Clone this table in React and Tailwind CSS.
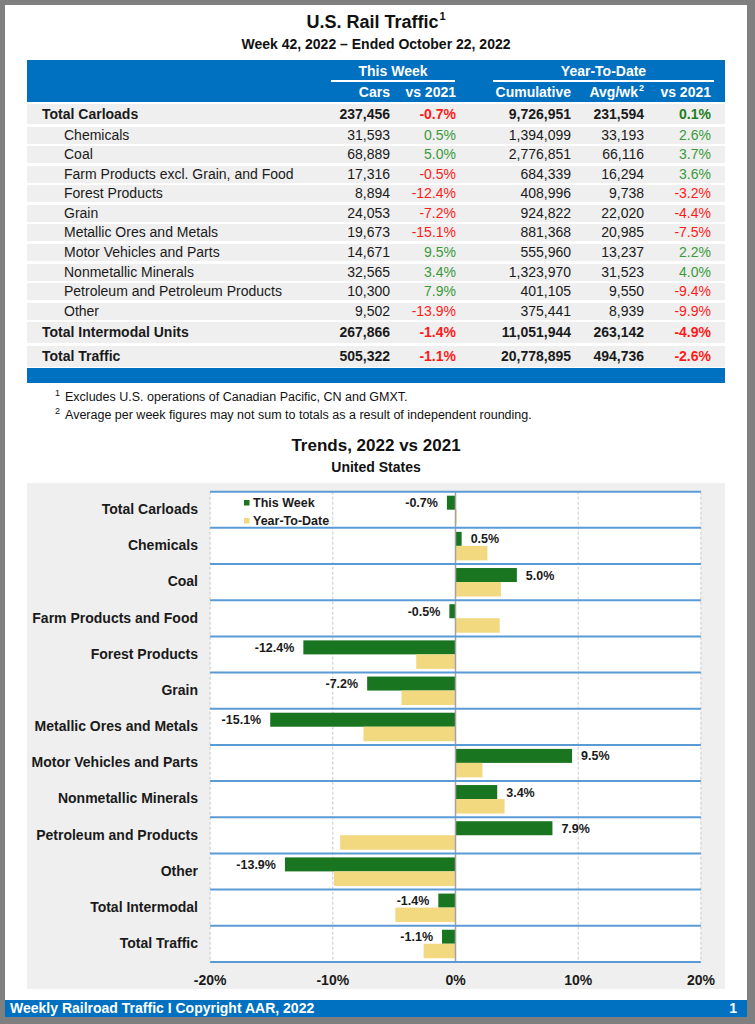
const rows = [
  { label: "Total Carloads", cars: "237,456", vs: "-0.7%", cum: "9,726,951", avg: "231,594", ytd: "0.1%", bold: true },
  { label: "Chemicals", cars: "31,593", vs: "0.5%", cum: "1,394,099", avg: "33,193", ytd: "2.6%" },
  { label: "Coal", cars: "68,889", vs: "5.0%", cum: "2,776,851", avg: "66,116", ytd: "3.7%" },
  { label: "Farm Products excl. Grain, and Food", cars: "17,316", vs: "-0.5%", cum: "684,339", avg: "16,294", ytd: "3.6%" },
  { label: "Forest Products", cars: "8,894", vs: "-12.4%", cum: "408,996", avg: "9,738", ytd: "-3.2%" },
  { label: "Grain", cars: "24,053", vs: "-7.2%", cum: "924,822", avg: "22,020", ytd: "-4.4%" },
  { label: "Metallic Ores and Metals", cars: "19,673", vs: "-15.1%", cum: "881,368", avg: "20,985", ytd: "-7.5%" },
  { label: "Motor Vehicles and Parts", cars: "14,671", vs: "9.5%", cum: "555,960", avg: "13,237", ytd: "2.2%" },
  { label: "Nonmetallic Minerals", cars: "32,565", vs: "3.4%", cum: "1,323,970", avg: "31,523", ytd: "4.0%" },
  { label: "Petroleum and Petroleum Products", cars: "10,300", vs: "7.9%", cum: "401,105", avg: "9,550", ytd: "-9.4%" },
  { label: "Other", cars: "9,502", vs: "-13.9%", cum: "375,441", avg: "8,939", ytd: "-9.9%" },
  { label: "Total Intermodal Units", cars: "267,866", vs: "-1.4%", cum: "11,051,944", avg: "263,142", ytd: "-4.9%", bold: true },
  { label: "Total Traffic", cars: "505,322", vs: "-1.1%", cum: "20,778,895", avg: "494,736", ytd: "-2.6%", bold: true },
];

const trends = [
  ["Total Carloads", -0.7, 0.1],
  ["Chemicals", 0.5, 2.6],
  ["Coal", 5.0, 3.7],
  ["Farm Products and Food", -0.5, 3.6],
  ["Forest Products", -12.4, -3.2],
  ["Grain", -7.2, -4.4],
  ["Metallic Ores and Metals", -15.1, -7.5],
  ["Motor Vehicles and Parts", 9.5, 2.2],
  ["Nonmetallic Minerals", 3.4, 4.0],
  ["Petroleum and Products", 7.9, -9.4],
  ["Other", -13.9, -9.9],
  ["Total Intermodal", -1.4, -4.9],
  ["Total Traffic", -1.1, -2.6],
];

const cols = "grid grid-cols-[303px_60px_66px_115px_73px_67px_14px]";

function pctClass(v, bold) {
  if (v.startsWith("-")) return "text-[#ff1a1a]";
  return bold ? "text-[#1e7d22]" : "text-[#3a9a3a]";
}

function DataRow({ r, idx }) {
  let h = "h-[17px] mt-[2.56px]";
  if (idx === 0) h = "h-[20px] mt-[2px] pt-[1px]";
  if (idx === 1) h = "h-[17px] mt-[2.7px]";
  if (idx === 11) h = "h-[21px] mt-[2.5px]";
  if (idx === 12) h = "h-[21px] mt-[3px]";
  const weight = r.bold ? "font-bold" : "font-normal";
  return (
    <div className={`${cols} ${h} ${weight} items-center bg-[#efefef] text-[14px] leading-[17px] text-[#1a1a1a]`}>
      <div className={r.bold ? "pl-[15px]" : "pl-[37px]"}>{r.label}</div>
      <div className="text-right">{r.cars}</div>
      <div className={`text-right ${pctClass(r.vs, r.bold)}`}>{r.vs}</div>
      <div className="text-right">{r.cum}</div>
      <div className="text-right">{r.avg}</div>
      <div className={`text-right ${pctClass(r.ytd, r.bold)}`}>{r.ytd}</div>
      <div />
    </div>
  );
}

function TrendChart() {
  const X = (v) => 255.5 + 12.27 * v;
  const lineY = (i) => 8.7 + 36.17 * i;
  const grid = [-20, -10, 10, 20];
  return (
    <svg width="520" height="506" className="overflow-visible" style={{ fontFamily: "'Liberation Sans', Arial, sans-serif" }}>
      <rect x={X(-20)} y={lineY(0)} width={X(20) - X(-20)} height={lineY(13) - lineY(0)} fill="#ffffff" />
      {grid.map((g) => (
        <line key={g} x1={X(g)} x2={X(g)} y1={lineY(0)} y2={lineY(13)} stroke="#c9c9c9" strokeWidth="1" strokeDasharray="3 2" />
      ))}
      {trends.map(([name, w, y], i) => {
        const ly = lineY(i);
        const gx = X(Math.min(0, w));
        const gw = Math.abs(X(w) - X(0));
        const yx = X(Math.min(0, y));
        const yw = Math.abs(X(y) - X(0));
        const label = `${w.toFixed(1)}%`;
        return (
          <g key={name}>
            <rect x={gx} y={ly + 4} width={gw} height={14} fill="#19751f" />
            <rect x={yx} y={ly + 18} width={yw} height={14.5} fill="#f2d87f" />
            <text
              x={w < 0 ? X(w) - 9 : X(w) + 9}
              y={ly + 15.5}
              textAnchor={w < 0 ? "end" : "start"}
              fontSize="12.5"
              fontWeight="700"
              fill="#1a1a1a"
            >
              {label}
            </text>
          </g>
        );
      })}
      <line x1={X(0)} x2={X(0)} y1={lineY(0)} y2={lineY(13)} stroke="#a3a3a3" strokeWidth="1.5" />
      {Array.from({ length: 14 }, (_, i) => (
        <line key={i} x1={X(-20)} x2={X(20)} y1={lineY(i)} y2={lineY(i)} stroke="#5b9bd5" strokeWidth="2" />
      ))}
      <rect x="44" y="17" width="5.5" height="5.5" fill="#19751f" />
      <text x="53" y="24.3" fontSize="12.5" fontWeight="700" fill="#1a1a1a">This Week</text>
      <rect x="44" y="35" width="5.5" height="5.5" fill="#f2d87f" />
      <text x="53" y="42.3" fontSize="12.5" fontWeight="700" fill="#1a1a1a">Year-To-Date</text>
      {[-20, -10, 0, 10, 20].map((t) => (
        <text key={t} x={X(t)} y="502" textAnchor="middle" fontSize="14" fontWeight="700" fill="#1a1a1a">
          {`${t}%`}
        </text>
      ))}
    </svg>
  );
}

export default function App() {
  return (
    <div className="w-[755px] h-[1024px] bg-[#7f7f7f] pt-[5px] pl-[5px] pr-[8px] pb-[7px] font-['Liberation_Sans',Arial,sans-serif]">
      <div className="flex h-[1012px] flex-col bg-white">
        <div className="pt-[6px] text-center text-[18px] leading-[22px] font-bold text-[#111]">
          U.S. Rail Traffic<sup className="top-[-8px] ml-[1px] text-[11px]">1</sup>
        </div>
        <div className="mt-[1.5px] text-center text-[14px] leading-[18px] font-bold text-[#111]">
          Week 42, 2022 – Ended October 22, 2022
        </div>

        <div className="mx-[22px] mt-[7px]">
          <div className="bg-[#0070c0] pt-[2.3px] pb-[0.5px] text-[14px] leading-[18px] font-bold text-white">
            <div className={cols}>
              <div className="col-start-2 col-span-2 text-center">This Week</div>
              <div className="col-start-4 col-span-3 ml-[37px] mr-[-3px] text-center">Year-To-Date</div>
            </div>
            <div className={`${cols} mt-[0.7px]`}>
              <div className="col-start-2 col-span-2 mx-[1px] h-[1.5px] bg-white" />
              <div className="col-start-4 col-span-3 ml-[37px] mr-[-3px] h-[1.5px] bg-white" />
            </div>
            <div className={`${cols} mt-[1.5px]`}>
              <div className="col-start-2 text-right">Cars</div>
              <div className="text-right">vs 2021</div>
              <div className="text-right">Cumulative</div>
              <div className="text-right">
                Avg/wk<sup className="top-[-6px] ml-[1px] text-[9px]">2</sup>
              </div>
              <div className="text-right">vs 2021</div>
            </div>
          </div>

          {rows.map((r, i) => (
            <DataRow key={r.label} r={r} idx={i} />
          ))}

          <div className="mt-[1px] h-[15px] bg-[#0070c0]" />

          <div className="mt-[5px] pl-[28px] text-[12.5px] leading-[18px] text-[#111]">
            <div>
              <sup className="top-[-5px] text-[9px]">1</sup>
              <span className="ml-[5px]">Excludes U.S. operations of Canadian Pacific, CN and GMXT.</span>
            </div>
            <div>
              <sup className="top-[-5px] text-[9px]">2</sup>
              <span className="ml-[5px]">Average per week figures may not sum to totals as a result of independent rounding.</span>
            </div>
          </div>

          <div className="mt-[11.6px] text-center text-[17px] leading-[20px] font-bold text-[#111]">
            Trends, 2022 vs 2021
          </div>
          <div className="mt-[2.7px] text-center text-[14px] leading-[18px] font-bold text-[#111]">
            United States
          </div>

          <div className="mt-[6.5px] flex h-[506px] bg-[#efefef]">
            <div className="w-[171px] pt-[8.7px]">
              {trends.map(([name]) => (
                <div key={name} className="flex h-[36.17px] items-center justify-end text-[14px] leading-[17px] font-bold text-[#1a1a1a]">
                  {name}
                </div>
              ))}
            </div>
            <div className="ml-[2px]">
              <TrendChart />
            </div>
          </div>
        </div>

        <div className="mt-auto flex h-[17px] items-center justify-between bg-[#0070c0] pl-[5px] pr-[10px] text-[14px] leading-[17px] font-bold text-white">
          <span>Weekly Railroad Traffic I Copyright AAR, 2022</span>
          <span>1</span>
        </div>
      </div>
    </div>
  );
}
